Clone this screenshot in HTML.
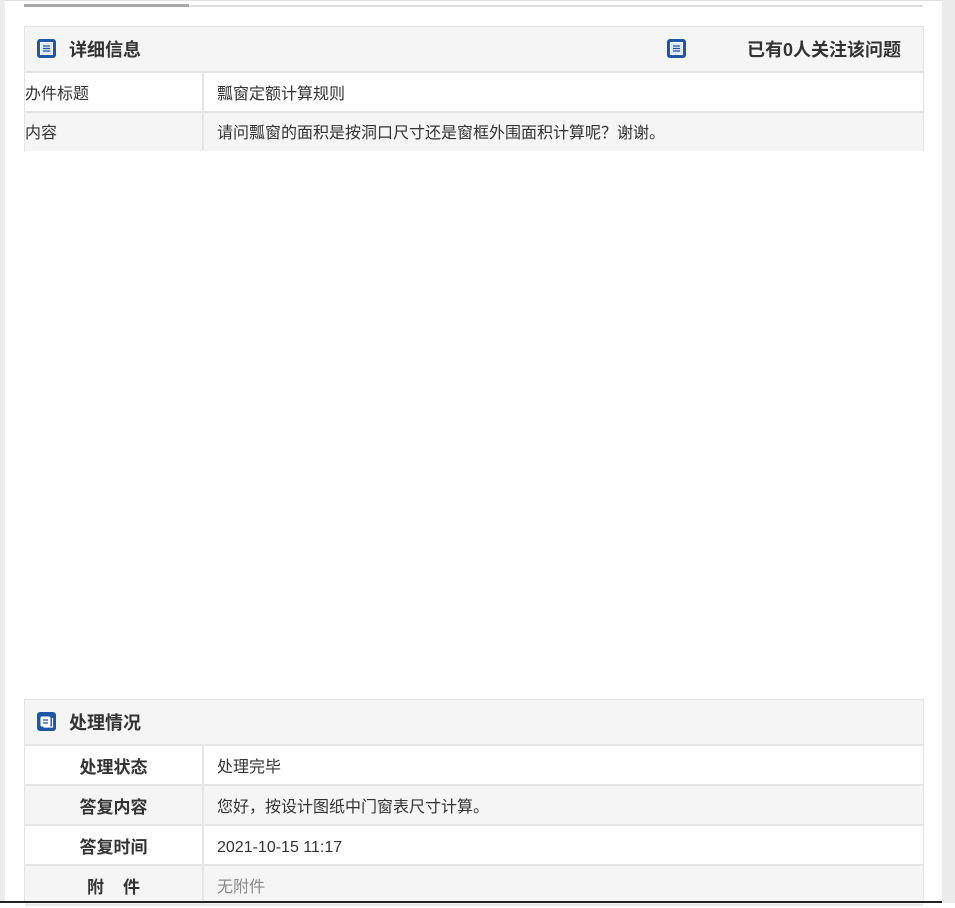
<!DOCTYPE html>
<html><head><meta charset="utf-8"><style>
*{margin:0;padding:0;box-sizing:border-box}
body{width:955px;height:903px;overflow:hidden;background:#fff;font-family:"Liberation Sans","Noto Sans CJK SC",sans-serif;position:relative;color:#333;font-size:16px}
.ls{position:absolute;left:0;top:0;width:5px;height:903px;background:#ececec}
.rs{position:absolute;left:942px;top:0;width:13px;height:903px;background:#ececec}
.top{position:absolute;left:5px;top:0;width:937px;height:1px;background:#e0e0e0}
.t1{position:absolute;left:24px;top:4px;width:165px;height:3px;background:#a8a8a8}
.t2{position:absolute;left:189px;top:5px;width:734px;height:2px;background:#ddd}
.box{position:absolute;left:24px;width:900px;border:1px solid #e3e3e3;border-bottom:none}
.hd{height:46px;background:#f5f5f5;position:relative;border-bottom:2px solid #e6e6e6}
.hd b{position:absolute;top:12px;font-size:18px;line-height:22px;color:#333}
.ic{position:absolute;top:12px}
.row{height:40px;position:relative;border-bottom:2px solid #e6e6e6}
.row.g{background:#f5f5f5}
.row .k{position:absolute;left:0;top:0;width:179px;height:100%;border-right:2px solid #e6e6e6;line-height:40px;padding-top:2px}
.row .v{position:absolute;left:192px;top:0;line-height:40px;padding-top:2px}
.c .k{text-align:center;font-weight:bold;font-size:17px}
.bot{position:absolute;left:0;top:901px;width:942px;height:2px;background:#222}
</style></head><body>
<div class="ls"></div><div class="rs"></div><div class="top"></div>
<div class="t1"></div><div class="t2"></div>
<svg width="0" height="0" style="position:absolute"><defs><g id="li"><rect x="0" y="0" width="19" height="19" rx="3" fill="#1f57a8"/><rect x="3.5" y="3.5" width="12" height="12" fill="#dfe8f7" stroke="#fff" stroke-width="1"/><path d="M6 7h7M6 9.5h7M6 12h7" stroke="#1f57a8" stroke-width="1.2"/></g>
<g id="l2"><rect x="0" y="0" width="19" height="19" rx="3" fill="#1f57a8"/><rect x="3.5" y="4.5" width="10" height="10" rx="1.5" fill="#fff"/><path d="M6 8h5M6 11h5" stroke="#1f57a8" stroke-width="1.3"/><path d="M15.5 6v9h-9" stroke="#fff" stroke-width="1.2" fill="none"/></g></defs></svg>
<div class="box" style="top:26px;height:126px">
<div class="hd"><svg class="ic" style="left:12px" width="19" height="19"><use href="#li"/></svg><b style="left:44px">详细信息</b>
<svg class="ic" style="left:642px" width="19" height="19"><use href="#li"/></svg><b style="left:722px">已有0人关注该问题</b></div>
<div class="row"><div class="k">办件标题</div><div class="v">瓢窗定额计算规则</div></div>
<div class="row g" style="border-bottom:none;height:38px"><div class="k" style="line-height:38px">内容</div><div class="v" style="line-height:38px">请问瓢窗的面积是按洞口尺寸还是窗框外围面积计算呢？谢谢。</div></div>
</div>
<div class="box c" style="top:699px;height:204px">
<div class="hd"><svg class="ic" style="left:12px" width="19" height="19"><use href="#l2"/></svg><b style="left:44px">处理情况</b></div>
<div class="row"><div class="k">处理状态</div><div class="v">处理完毕</div></div>
<div class="row g"><div class="k">答复内容</div><div class="v">您好，按设计图纸中门窗表尺寸计算。</div></div>
<div class="row"><div class="k">答复时间</div><div class="v">2021-10-15 11:17</div></div>
<div class="row g"><div class="k">附&nbsp;&nbsp;&nbsp;&nbsp;件</div><div class="v" style="color:#888">无附件</div></div>
</div>
<div class="bot"></div>
</body></html>
